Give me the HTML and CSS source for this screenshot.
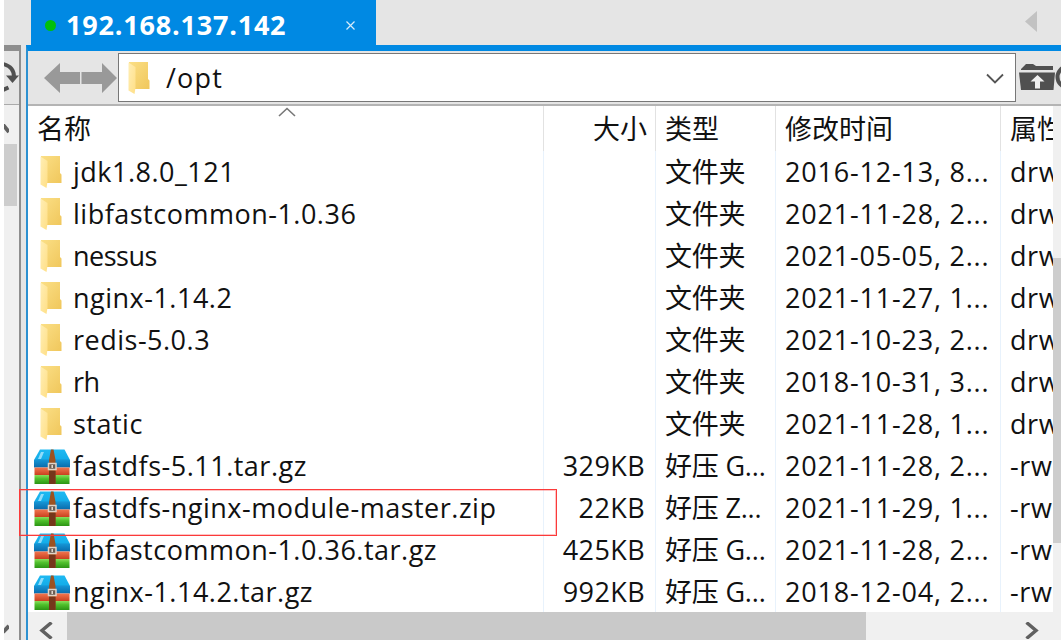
FILE: index.html
```html
<!DOCTYPE html>
<html lang="zh-CN">
<head>
    <meta charset="UTF-8">
    <meta name="viewport" content="width=device-width, initial-scale=1.0">
    <title>192.168.137.142</title>
    <link rel="stylesheet" href="styles.css">
</head>
<body>

<!-- Shared icons -->
<svg class="icon-defs" width="0" height="0">
    <defs>
        <linearGradient id="folderFront" x1="0" y1="0" x2="1" y2="1">
            <stop offset="0" stop-color="#ffeeb5"/>
            <stop offset="1" stop-color="#ffdf86"/>
        </linearGradient>
        <linearGradient id="folderBack" x1="0" y1="0" x2="1" y2="1">
            <stop offset="0" stop-color="#fbdf86"/>
            <stop offset="1" stop-color="#f0c75c"/>
        </linearGradient>
        <linearGradient id="lid" x1="0" y1="0" x2="0" y2="1">
            <stop offset="0" stop-color="#1fb9f2"/>
            <stop offset="0.5" stop-color="#14aeea"/>
            <stop offset="0.6" stop-color="#1593d3"/>
            <stop offset="1" stop-color="#0a6bab"/>
        </linearGradient>
        <linearGradient id="redBand" x1="0" y1="0" x2="0" y2="1">
            <stop offset="0" stop-color="#f2764f"/>
            <stop offset="1" stop-color="#c9401f"/>
        </linearGradient>
        <linearGradient id="greenBand" x1="0" y1="0" x2="0" y2="1">
            <stop offset="0" stop-color="#8ade5c"/>
            <stop offset="0.4" stop-color="#4fc02c"/>
            <stop offset="1" stop-color="#2b9414"/>
        </linearGradient>
        <symbol id="folder" viewBox="0 0 22 32">
            <path d="M1 0H20V17L21.500 18.500V27H7L1 26Z" fill="url(#folderBack)"/>
            <path d="M0.500 0.500L7.500 5V25.500L6.500 32L0.500 28.500Z" fill="url(#folderFront)"/>
        </symbol>
        <symbol id="archive" viewBox="0 0 36 35">
            <path d="M6 0.500H30.500L36 11V18.500H0V11Z" fill="url(#lid)"/>
            <path d="M7 3H10L7 10H4Z" fill="#8fdcfa"/>
            <rect x="0.500" y="18.500" width="35" height="7.500" fill="url(#redBand)"/>
            <rect x="0.500" y="26" width="35" height="9" fill="url(#greenBand)"/>
            <path d="M17 0.500H19.500L21.500 11V35H15V11Z" fill="#9b5222"/>
            <rect x="15" y="22" width="6.500" height="13" fill="#75361b"/>
            <rect x="14.500" y="14.500" width="7.500" height="6" fill="#6b5d53" stroke="#e1d5c9" stroke-width="1.500"/>
            <path d="M18.200 16V19" stroke="#efe6dc" stroke-width="1.400"/>
        </symbol>
    </defs>
</svg>

<div class="window">
    <!-- Left pane, cut off by the window edge -->
    <div class="side">
        <div class="side-top"></div>
        <div class="side-pane">
            <div class="side-bar">
                <svg width="15" height="34" viewBox="0 0 15 34">
                    <path d="M-1 3C7 5 10 9 10 16" fill="none" stroke="#505050" stroke-width="4"/>
                    <path d="M2 14.500H15L8.500 22Z" fill="#505050"/>
                    <path d="M-1 29L4.500 26.500" stroke="#505050" stroke-width="4"/>
                </svg>
            </div>
            <div class="side-scroll">
                <svg class="side-up" width="5" height="10" viewBox="0 0 5 10"><path d="M-3 4L0 2L5 8" fill="none" stroke="#606060" stroke-width="4"/></svg>
                <div class="side-thumb"></div>
                <svg class="side-down" width="5" height="10" viewBox="0 0 5 10"><path d="M-1 8L5 2" fill="none" stroke="#606060" stroke-width="4"/></svg>
            </div>
        </div>
    </div>

    <div class="main">
        <!-- Session tabs -->
        <div class="tabs">
            <div class="tab">
                <span class="status"></span>
                <span class="host">192.168.137.142</span>
                <svg class="tab-close" width="9" height="9" viewBox="0 0 9 9"><path d="M0.500 0.500L8.500 8.500M8.500 0.500L0.500 8.500" stroke="#d5ebfb" stroke-width="1.200"/></svg>
            </div>
            <svg class="tab-prev" width="12" height="21" viewBox="0 0 12 21"><path d="M12 0V21L0 10.500Z" fill="#c2c2c2"/></svg>
        </div>

        <div class="pane">
            <!-- Toolbar -->
            <div class="toolbar">
                <svg class="nav" width="73" height="30" viewBox="0 0 73 30" fill="#999">
                    <path d="M0 15L16 0V9H36V21H16V30Z"/>
                    <path d="M73 15L58 0V9H37.500V21H58V30Z"/>
                </svg>
                <div class="address">
                    <svg width="22" height="32"><use href="#folder"/></svg>
                    <span class="path">/opt</span>
                    <svg class="drop" width="18" height="11" viewBox="0 0 18 11"><path d="M1 1.500L9 9.500L17 1.500" fill="none" stroke="#555" stroke-width="1.800"/></svg>
                </div>
                <svg class="up" width="42" height="28" viewBox="0 0 42 28">
                    <path d="M2 6L7 1H14L17 3H34V7H2Z" fill="#505050"/>
                    <path d="M0 9.500H36L34.500 27H2Z" fill="#505050"/>
                    <path d="M18.500 12L25.500 18.500H21V25.500H16V18.500H11.500Z" fill="#f0f0f0"/>
                    <circle cx="49" cy="14" r="10.500" fill="none" stroke="#505050" stroke-width="4"/>
                </svg>
            </div>

            <!-- File list -->
            <div class="content">
                <div class="list">
                    <div class="row head">
                        <span class="name">名称<svg class="sort" width="18" height="10" viewBox="0 0 18 10"><path d="M1 9L9 1.500L17 9" fill="none" stroke="#777" stroke-width="1.600"/></svg></span>
                        <span class="size">大小</span><span class="type">类型</span><span class="date">修改时间</span><span class="attr">属性</span>
                    </div>
                    <div class="row">
                        <span class="name"><svg class="folder"><use href="#folder"/></svg>jdk1.8.0_121</span>
                        <span class="size"></span><span class="type">文件夹</span><span class="date">2016-12-13, 8...</span><span class="attr">drw</span>
                    </div>
                    <div class="row">
                        <span class="name"><svg class="folder"><use href="#folder"/></svg>libfastcommon-1.0.36</span>
                        <span class="size"></span><span class="type">文件夹</span><span class="date">2021-11-28, 2...</span><span class="attr">drw</span>
                    </div>
                    <div class="row">
                        <span class="name word"><svg class="folder"><use href="#folder"/></svg>nessus</span>
                        <span class="size"></span><span class="type">文件夹</span><span class="date">2021-05-05, 2...</span><span class="attr">drw</span>
                    </div>
                    <div class="row">
                        <span class="name"><svg class="folder"><use href="#folder"/></svg>nginx-1.14.2</span>
                        <span class="size"></span><span class="type">文件夹</span><span class="date">2021-11-27, 1...</span><span class="attr">drw</span>
                    </div>
                    <div class="row">
                        <span class="name"><svg class="folder"><use href="#folder"/></svg>redis-5.0.3</span>
                        <span class="size"></span><span class="type">文件夹</span><span class="date">2021-10-23, 2...</span><span class="attr">drw</span>
                    </div>
                    <div class="row">
                        <span class="name word"><svg class="folder"><use href="#folder"/></svg>rh</span>
                        <span class="size"></span><span class="type">文件夹</span><span class="date">2018-10-31, 3...</span><span class="attr">drw</span>
                    </div>
                    <div class="row">
                        <span class="name"><svg class="folder"><use href="#folder"/></svg>static</span>
                        <span class="size"></span><span class="type">文件夹</span><span class="date">2021-11-28, 1...</span><span class="attr">drw</span>
                    </div>
                    <div class="row">
                        <span class="name"><svg class="archive"><use href="#archive"/></svg>fastdfs-5.11.tar.gz</span>
                        <span class="size">329KB</span><span class="type">好压 G...</span><span class="date">2021-11-28, 2...</span><span class="attr">-rw</span>
                    </div>
                    <div class="row">
                        <span class="name"><svg class="archive"><use href="#archive"/></svg>fastdfs-nginx-module-master.zip</span>
                        <span class="size">22KB</span><span class="type">好压 Z...</span><span class="date">2021-11-29, 1...</span><span class="attr">-rw</span>
                    </div>
                    <div class="row">
                        <span class="name"><svg class="archive"><use href="#archive"/></svg>libfastcommon-1.0.36.tar.gz</span>
                        <span class="size">425KB</span><span class="type">好压 G...</span><span class="date">2021-11-28, 2...</span><span class="attr">-rw</span>
                    </div>
                    <div class="row">
                        <span class="name"><svg class="archive"><use href="#archive"/></svg>nginx-1.14.2.tar.gz</span>
                        <span class="size">992KB</span><span class="type">好压 G...</span><span class="date">2018-12-04, 2...</span><span class="attr">-rw</span>
                    </div>
                </div>
                <div class="vscroll"><div class="vthumb"></div></div>
            </div>

            <div class="hscroll">
                <svg class="left" width="14" height="17" viewBox="0 0 14 17"><path d="M12.500 0.500L3 8.500L12.500 16.500" fill="none" stroke="#606060" stroke-width="3.500"/></svg>
                <div class="hthumb"></div>
                <svg class="right" width="14" height="17" viewBox="0 0 14 17"><path d="M1.500 0.500L11 8.500L1.500 16.500" fill="none" stroke="#606060" stroke-width="3.500"/></svg>
            </div>
        </div>
    </div>
</div>

<!-- Red frame round the zip file -->
<div class="mark"></div>

</body>
</html>
```
FILE: styles.css
```css
* {
    margin: 0;
    padding: 0;
    box-sizing: border-box;
}

body {
    font-family: "Open Sans", "Noto Sans CJK SC", sans-serif;
    font-size: 27px;
    color: #111;
    background-color: #fff;
    height: 100vh;
    overflow: hidden;
}

svg {
    display: block;
    flex-shrink: 0;
}

.icon-defs {
    position: absolute;
}

.window {
    display: flex;
    height: 640px;
    padding-left: 4px;
    overflow: hidden;
}

/* Left pane */
.side {
    width: 22px;
    background-color: #e5e5e5;
}

.side-top {
    height: 45px;
}

.side-pane {
    width: 17px;
    height: 595px;
    border-top: 6px solid #8e8e8e;
    border-right: 2px solid #8e8e8e;
    display: flex;
    flex-direction: column;
}

.side-bar {
    height: 54px;
    padding-top: 10px;
    border-bottom: 1px solid #aaa;
    overflow: hidden;
}

.side-scroll {
    flex-grow: 1;
    display: flex;
    flex-direction: column;
    background-color: #f0f0f0;
}

.side-up {
    margin: 19px 0 10px;
}

.side-thumb {
    width: 13px;
    height: 62px;
    background-color: #cdcdcd;
}

.side-down {
    margin-top: auto;
    margin-bottom: 6px;
}

/* Main pane */
.main {
    width: 1035px;
    display: flex;
    flex-direction: column;
}

.tabs {
    display: flex;
    justify-content: space-between;
    height: 45px;
    padding-left: 5px;
    background-color: #e5e5e5;
}

.tab {
    display: flex;
    align-items: center;
    width: 345px;
    height: 45px;
    padding-left: 14px;
    background-color: #0089e3;
}

.status {
    width: 11px;
    height: 11px;
    margin-top: 6px;
    border-radius: 50%;
    background-color: #00c00c;
}

.host {
    width: 290px;
    padding: 4px 0 0 10px;
    font-weight: bold;
    letter-spacing: 0.8px;
    color: #fff;
}

.tab-close {
    margin-top: 6px;
}

.tab-prev {
    margin: 11px 24px 0 0;
}

.pane {
    height: 595px;
    border-top: 6px solid #0089e3;
    border-left: 2px solid #2d91d1;
    display: flex;
    flex-direction: column;
}

.toolbar {
    display: flex;
    height: 55px;
    padding: 2px 0 0 16px;
    border-bottom: 2px solid #b4b4b4;
    background-color: #e5e5e5;
}

.nav {
    margin-top: 10px;
}

.address {
    display: flex;
    width: 898px;
    height: 49px;
    margin-left: 1px;
    padding: 8px 11px 0 9px;
    border: 1px solid #777;
    background-color: #fff;
}

.path {
    margin: -3px 0 0 16px;
    line-height: 37px;
    letter-spacing: 1.2px;
}

.drop {
    margin: 11px 0 0 auto;
}

.up {
    margin: 10px 0 0 3px;
}

/* File list */
.content {
    display: flex;
    height: 506px;
}

.list {
    width: 1025px;
    overflow: hidden;
}

.row {
    display: grid;
    grid-template-columns: 516px 112px 120px 225px 52px;
    height: 42px;
    line-height: 42px;
    white-space: nowrap;
}

.row span {
    overflow: hidden;
    border-right: 1px solid #e8f2fc;
}

.row .attr {
    padding-left: 9px;
    border-right: none;
    letter-spacing: 0.6px;
}

.row .name {
    display: flex;
    padding-left: 9px;
    letter-spacing: 0.5px;
}

.row .word {
    letter-spacing: -0.5px;
}

.row .size {
    padding-right: 10px;
    text-align: right;
    letter-spacing: 0.4px;
}

.row .type {
    padding-left: 9px;
    letter-spacing: -0.2px;
}

.row .date {
    padding-left: 9px;
    letter-spacing: 0.8px;
}

.row.head {
    height: 45px;
}

.row.head span {
    line-height: 46px;
    letter-spacing: 0;
    border-color: #e2e2e2;
}

.row.head .size {
    padding-right: 8px;
}

.folder {
    width: 22px;
    height: 32px;
    margin: 5px 11px 0 3px;
}

.archive {
    width: 36px;
    height: 35px;
    margin: 4px 3px 0 -3px;
}

.sort {
    margin: 1px 0 0 187px;
}

/* Scrollbars */
.vscroll {
    width: 8px;
    padding-top: 152px;
    background-color: #f0f0f0;
}

.vthumb {
    height: 285px;
    background-color: #cdcdcd;
}

.hscroll {
    display: flex;
    height: 28px;
    background-color: #f0f0f0;
}

.left {
    margin: 10px 0 0 11px;
}

.hthumb {
    width: 799px;
    height: 28px;
    margin-left: 14px;
    background-color: #c9c9c9;
}

.right {
    margin: 10px 0 0 159px;
}

.mark {
    position: absolute;
    left: 19px;
    top: 489px;
    width: 538px;
    height: 47px;
    border: 1px solid #fb3a3a;
    box-shadow: inset 0 0 0 1px rgba(251, 58, 58, 0.3);
}
```
